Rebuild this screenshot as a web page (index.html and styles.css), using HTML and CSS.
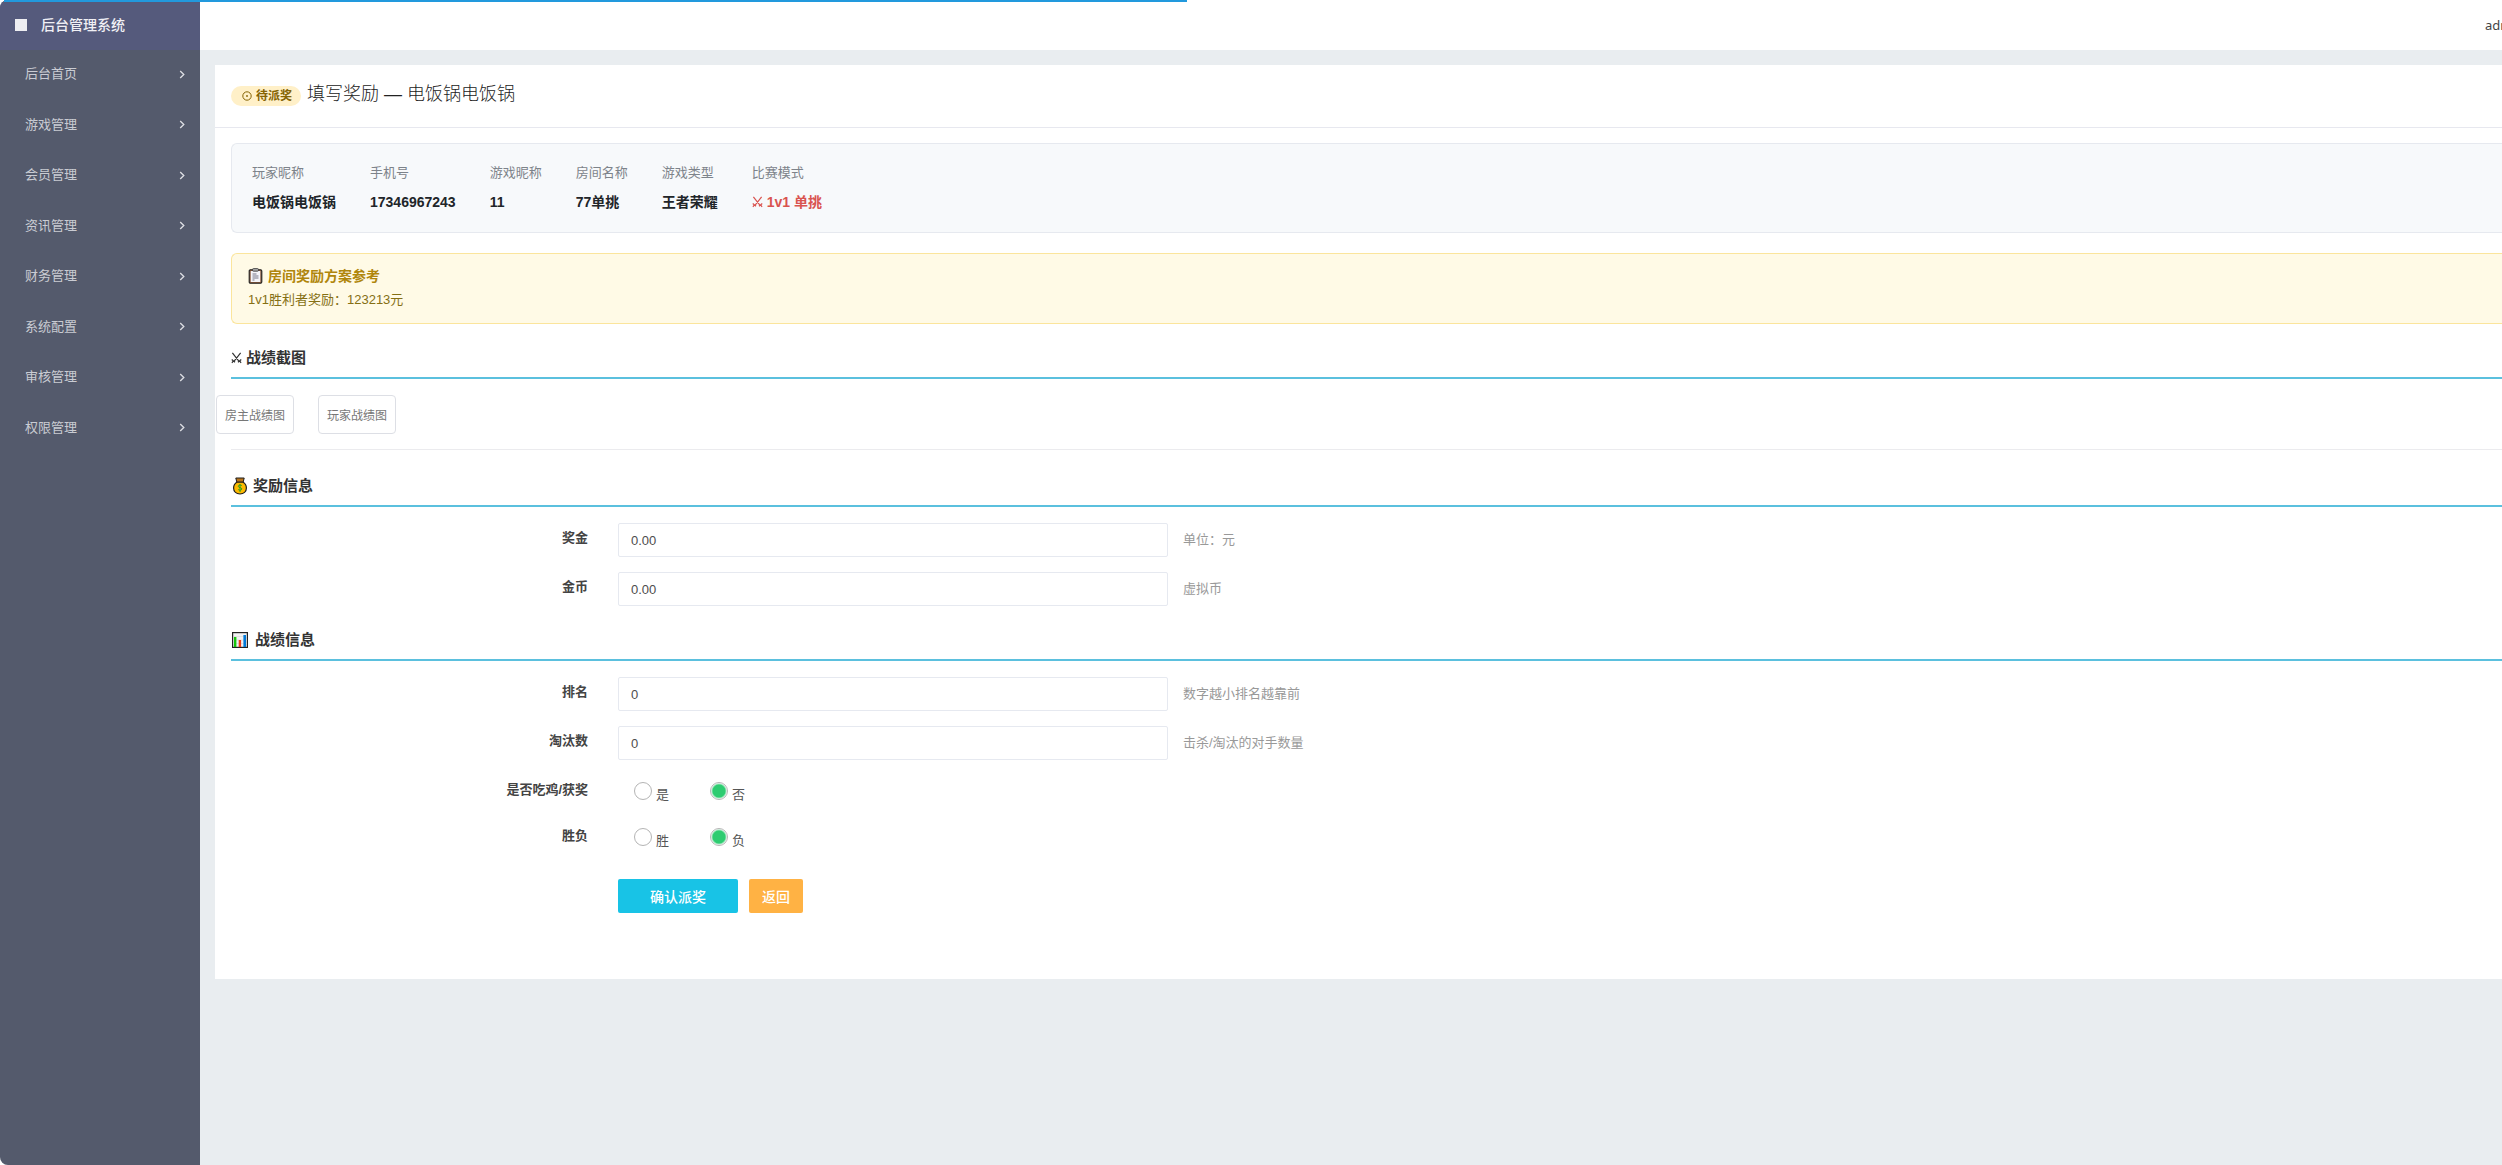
FILE: index.html
```html
<!DOCTYPE html>
<html lang="zh-CN">
<head>
  <meta charset="UTF-8">
  <meta name="viewport" content="width=device-width, initial-scale=1.0">
  <title>后台管理系统</title>
  <link rel="stylesheet" href="styles.css">
</head>
<body>
  <div class="progress"></div>
  <div class="layout">
    <aside class="sidebar">
      <a href="#" class="logo"><span class="logo-mark"></span>后台管理系统</a>
      <nav class="menu">
        <a href="#">后台首页<svg class="arrow" viewBox="0 0 6 10"><path d="M1 1l4 4-4 4"/></svg></a>
        <a href="#">游戏管理<svg class="arrow" viewBox="0 0 6 10"><path d="M1 1l4 4-4 4"/></svg></a>
        <a href="#">会员管理<svg class="arrow" viewBox="0 0 6 10"><path d="M1 1l4 4-4 4"/></svg></a>
        <a href="#">资讯管理<svg class="arrow" viewBox="0 0 6 10"><path d="M1 1l4 4-4 4"/></svg></a>
        <a href="#">财务管理<svg class="arrow" viewBox="0 0 6 10"><path d="M1 1l4 4-4 4"/></svg></a>
        <a href="#">系统配置<svg class="arrow" viewBox="0 0 6 10"><path d="M1 1l4 4-4 4"/></svg></a>
        <a href="#">审核管理<svg class="arrow" viewBox="0 0 6 10"><path d="M1 1l4 4-4 4"/></svg></a>
        <a href="#">权限管理<svg class="arrow" viewBox="0 0 6 10"><path d="M1 1l4 4-4 4"/></svg></a>
      </nav>
    </aside>

    <div class="main">
      <header class="topbar"><span class="user">admin</span></header>

      <main class="panel">
        <div class="panel-heading">
          <span class="badge"><svg class="badge-icon" viewBox="0 0 10 10"><circle cx="5" cy="5" r="4.2"/><circle class="dot" cx="5" cy="5" r="0.9"/></svg>待派奖</span>
          <h1>填写奖励 — 电饭锅电饭锅</h1>
        </div>

        <div class="panel-body">
          <dl class="info">
            <div><dt>玩家昵称</dt><dd>电饭锅电饭锅</dd></div>
            <div><dt>手机号</dt><dd>17346967243</dd></div>
            <div><dt>游戏昵称</dt><dd>11</dd></div>
            <div><dt>房间名称</dt><dd>77单挑</dd></div>
            <div><dt>游戏类型</dt><dd>王者荣耀</dd></div>
            <div><dt>比赛模式</dt><dd class="mode"><svg class="swords" viewBox="0 0 12 12"><path d="M1.5.5l7.500 9.500M10.500.5L3 10M.8 7.600l3.600 3M11.200 7.600l-3.600 3M2.600 9.200L1 11.400M9.400 9.200L11 11.400"/></svg>1v1 单挑</dd></div>
          </dl>

          <div class="notice">
            <h2><svg class="clipboard" viewBox="0 0 14 16"><rect x="0.7" y="1.7" width="12.6" height="13.6" rx="1.2" fill="#8a5a3c" stroke="#222" stroke-width="1.1"/><rect x="2.2" y="3" width="9.6" height="11" fill="#f4f4f8"/><rect x="4" y="0.6" width="6" height="2.6" rx="1" fill="#aaa" stroke="#333" stroke-width=".8"/><path d="M4 6h4M4 8h6M4 10h6M4 12h2" stroke="#778" fill="none"/></svg>房间奖励方案参考</h2>
            <p>1v1胜利者奖励：123213元</p>
          </div>

          <h3 class="section-title"><svg class="swords" viewBox="0 0 12 12"><path d="M1.5.5l7.500 9.500M10.500.5L3 10M.8 7.600l3.600 3M11.200 7.600l-3.600 3M2.600 9.200L1 11.400M9.400 9.200L11 11.400"/></svg>战绩截图</h3>
          <div class="shots">
            <a href="#">房主战绩图</a>
            <a href="#">玩家战绩图</a>
          </div>

          <form>
            <h3 class="section-title"><svg class="emoji" viewBox="0 0 16 18"><path d="M5.200 5C3 6.200 1.600 8.300 1.600 11c0 3.800 2.800 6 6.400 6s6.400-2.200 6.400-6c0-2.700-1.400-4.800-3.600-6z" fill="#fdb900" stroke="#1c1c1c" stroke-width="1.200"/><path d="M3.800 1h8.400l-1 4H4.800z" fill="#b8741a" stroke="#1c1c1c" stroke-width="1"/><path d="M9.800 8.600c-.6-.8-3.500-.9-3.500.7 0 1.700 3.500.9 3.500 2.600 0 1.600-2.900 1.600-3.600.6M8 7v8" fill="none" stroke="#2ca01c" stroke-width="1"/></svg>奖励信息</h3>
            <div class="form-row">
              <label for="bonus">奖金</label>
              <input type="text" id="bonus" value="0.00">
              <span class="hint">单位：元</span>
            </div>
            <div class="form-row">
              <label for="coin">金币</label>
              <input type="text" id="coin" value="0.00">
              <span class="hint">虚拟币</span>
            </div>

            <h3 class="section-title"><svg class="emoji chart" viewBox="0 0 16 16"><rect x="0.600" y="0.600" width="14.800" height="14.800" fill="#f2f2f2" stroke="#222" stroke-width="1.200"/><path d="M1 4.500h14M1 8h14M1 11.500h14" stroke="#d5d5d5" stroke-width=".6"/><rect x="2" y="5" width="2.400" height="10" fill="#16c60c"/><rect x="6.700" y="8" width="2.400" height="7" fill="#f03a17"/><rect x="11.400" y="3" width="2.600" height="12" fill="#0078d7"/></svg>战绩信息</h3>
            <div class="form-row">
              <label for="rank">排名</label>
              <input type="text" id="rank" value="0">
              <span class="hint">数字越小排名越靠前</span>
            </div>
            <div class="form-row">
              <label for="kills">淘汰数</label>
              <input type="text" id="kills" value="0">
              <span class="hint">击杀/淘汰的对手数量</span>
            </div>
            <div class="form-row radio-row" role="radiogroup" aria-labelledby="chicken-label">
              <span class="label" id="chicken-label">是否吃鸡/获奖</span>
              <div class="radios">
                <label><input type="radio" name="chicken"><span>是</span></label>
                <label><input type="radio" name="chicken" checked><span>否</span></label>
              </div>
            </div>
            <div class="form-row radio-row" role="radiogroup" aria-labelledby="result-label">
              <span class="label" id="result-label">胜负</span>
              <div class="radios">
                <label><input type="radio" name="result"><span>胜</span></label>
                <label><input type="radio" name="result" checked><span>负</span></label>
              </div>
            </div>
            <div class="form-row actions">
              <div class="buttons">
                <button type="submit" class="btn btn-primary">确认派奖</button>
                <button type="button" class="btn btn-warning">返回</button>
              </div>
            </div>
          </form>
        </div>
      </main>
    </div>
  </div>
</body>
</html>
```
FILE: styles.css
```css
* {
  box-sizing: border-box;
}
body {
  margin: 0;
  overflow: hidden;
  font-family: "Liberation Sans", "Noto Sans CJK SC", sans-serif;
  font-size: 13px;
  line-height: 20px;
  color: #555;
  background: #fff;
}
a {
  color: inherit;
  text-decoration: none;
}
h1, h2, h3, p, dl, dd {
  margin: 0;
}
.progress {
  position: fixed;
  top: 0;
  left: 4px;
  z-index: 10;
  width: 47.3%;
  height: 2px;
  background: #2299dd;
}
.layout {
  display: flex;
  min-height: 100vh;
  background: #e9edf0;
  border-radius: 8px 0 0 8px;
  overflow: hidden;
}

/* sidebar */
.sidebar {
  flex: 0 0 200px;
  background: #545a6c;
}
.logo {
  display: flex;
  align-items: center;
  gap: 14px;
  height: 50px;
  padding-left: 15px;
  background: #555a7c;
  color: #f0f0f5;
  font-size: 14px;
  font-weight: 500;
}
.logo-mark {
  width: 12px;
  height: 12px;
  background: #eeeef2;
}
.menu {
  display: grid;
  grid-auto-rows: 1fr;
  height: 404px;
}
.menu a {
  display: flex;
  align-items: center;
  justify-content: space-between;
  padding: 0 15px 2px 25px;
  color: #caccd3;
}
.arrow {
  width: 6px;
  height: 9px;
  fill: none;
  stroke: #dcdde2;
  stroke-width: 1.5;
}

/* content */
.main {
  flex: 1;
  min-width: 0;
}
.topbar {
  display: flex;
  justify-content: flex-end;
  align-items: center;
  height: 50px;
  background: #fff;
}
.user {
  width: 17px;
  font-family: "Noto Sans", sans-serif;
  color: #444;
}
.panel {
  margin: 15px 0 0 15px;
  padding-bottom: 66px;
  background: #fff;
}
.panel-heading {
  display: flex;
  align-items: center;
  gap: 6px;
  height: 63px;
  padding-left: 16px;
  border-bottom: 1px solid #e7e8ef;
}
.panel-heading h1 {
  padding-bottom: 4px;
  font-size: 18px;
  font-weight: 300;
  color: #222;
}
.badge {
  display: flex;
  align-items: center;
  gap: 4px;
  height: 20px;
  padding: 0 9px 0 11px;
  border-radius: 10px;
  background: #fff0c8;
  color: #856404;
  font-size: 12px;
  font-weight: 600;
}
.badge-icon {
  width: 10px;
  height: 10px;
  fill: none;
  stroke: #856404;
}
.badge-icon .dot {
  fill: #856404;
  stroke: none;
}
.panel-body {
  padding: 15px 0 0 16px;
}
.info {
  display: flex;
  gap: 34px;
  height: 90px;
  padding: 19px 20px;
  border: 1px solid #e6e9ef;
  border-right: 0;
  border-radius: 6px 0 0 6px;
  background: #f7f9fb;
}
.info dt {
  margin-bottom: 9px;
  color: #7d838a;
}
.info dd {
  font-size: 14px;
  font-weight: 700;
  color: #212529;
}
.info .mode {
  color: #d9534f;
}
.swords {
  width: 11px;
  height: 12px;
  margin-right: 4px;
  vertical-align: -1px;
  fill: none;
  stroke: currentColor;
  stroke-width: 1.3;
}
.notice {
  height: 71px;
  margin-top: 20px;
  padding: 12px 16px;
  border: 1px solid #fbe59c;
  border-right: 0;
  border-radius: 6px 0 0 6px;
  background: #fffae6;
  color: #856f14;
}
.notice h2 {
  margin-bottom: 4px;
  font-size: 14px;
  line-height: 20px;
  color: #b0860c;
}
.clipboard {
  width: 15px;
  height: 16px;
  margin-right: 5px;
  vertical-align: -3px;
}
.section-title {
  height: 37px;
  margin-bottom: 16px;
  padding-top: 4px;
  border-bottom: 2px solid #5bc0de;
  font-size: 15px;
  font-weight: 600;
  line-height: 24px;
  color: #333;
}
.notice + .section-title {
  margin-top: 18px;
}
.emoji {
  width: 16px;
  height: 18px;
  margin: 0 5px 0 1px;
  vertical-align: -4px;
}
.chart {
  height: 16px;
  margin-right: 7px;
  vertical-align: -3px;
}
.shots {
  display: flex;
  gap: 24px;
  height: 55px;
  border-bottom: 1px solid #ebebee;
}
.shots a {
  height: 39px;
  padding: 0 8px;
  border: 1px solid #dddfe5;
  border-radius: 4px;
  font-size: 12px;
  line-height: 40px;
  color: #777;
}
.shots a:first-child {
  margin-left: -15px;
}
form {
  padding-top: 20px;
}

/* form rows */
.form-row {
  display: grid;
  grid-template-columns: 372px minmax(200px, 550px) 1fr;
  column-gap: 15px;
  margin-bottom: 15px;
}
.form-row > label,
.form-row > .label {
  padding-right: 15px;
  text-align: right;
  font-weight: 600;
  line-height: 30px;
  color: #444;
}
.form-row input[type="text"] {
  height: 34px;
  padding: 6px 12px;
  border: 1px solid #e6e9f0;
  border-radius: 2px;
  background: #fff;
  font-family: inherit;
  font-size: 13px;
  color: #4d4d4d;
}
.hint {
  line-height: 34px;
  color: #999;
}
.form-row + .section-title {
  margin-top: 18px;
}
.radio-row {
  height: 31px;
}
.radios {
  display: flex;
  gap: 41px;
  padding-left: 16px;
}
.radios label {
  display: flex;
  gap: 4px;
}
.radios span {
  padding-top: 10px;
}
.radios input {
  appearance: none;
  width: 18px;
  height: 18px;
  margin: 7px 0 0;
  border: 1px solid #b4b4b4;
  border-radius: 50%;
}
.radios input:checked {
  background: radial-gradient(circle, #2ecc71 6px, #fff 8px);
}
.actions {
  margin: 27px 0 0;
}
.buttons {
  grid-column: 2;
  display: flex;
  gap: 11px;
}
.btn {
  height: 34px;
  padding: 0 13px;
  border: 0;
  border-radius: 2px;
  font-family: inherit;
  font-size: 14px;
  font-weight: 500;
  color: #fff;
}
.btn-primary {
  padding: 0 32px;
  background: #18c3e6;
}
.btn-warning {
  background: #ffb244;
}
```
